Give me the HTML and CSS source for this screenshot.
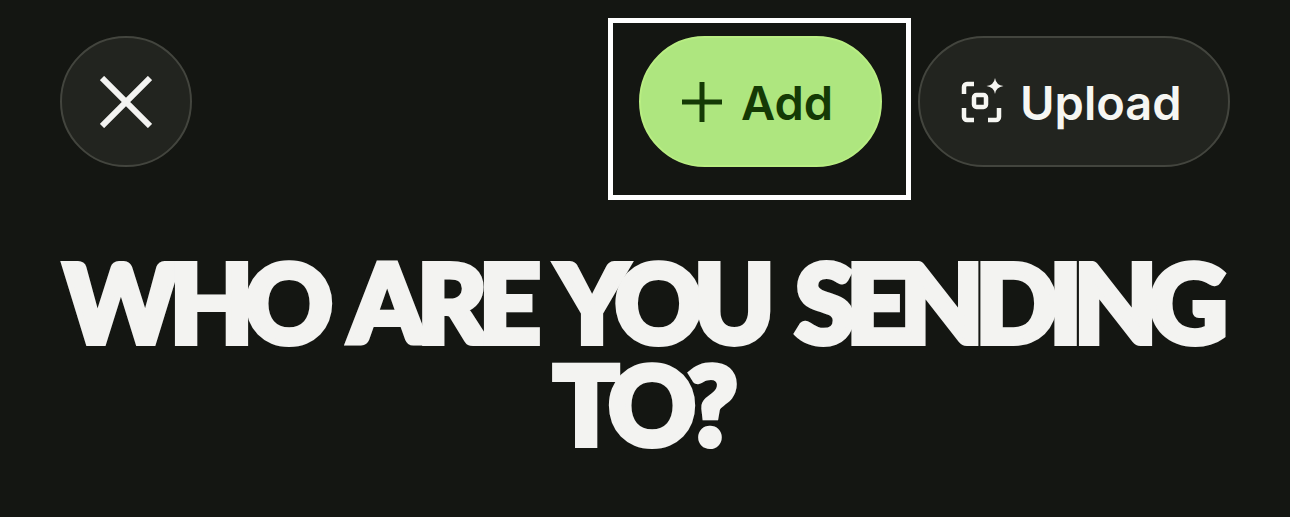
FILE: index.html
```html
<!DOCTYPE html>
<html lang="en">
<head>
<meta charset="utf-8">
<title>Who are you sending to?</title>
<link rel="stylesheet" href="styles.css">
</head>
<body>
<main class="screen">
  <header class="toolbar">
    <button class="btn btn-round" aria-label="Close">
      <svg class="icon-close" viewBox="0 0 52 52" aria-hidden="true"><path d="M2 2 50 50M50 2 2 50"/></svg>
    </button>
    <div class="actions">
      <button class="btn btn-add">
        <svg class="icon-plus" viewBox="0 0 42 42" aria-hidden="true"><path d="M21 1V41M1 21H41"/></svg>
        <span class="label">Add</span>
      </button>
      <button class="btn btn-upload">
        <svg class="icon-upload" viewBox="0 0 42 44" aria-hidden="true">
          <path class="line" d="M14 4H7A3 3 0 0 0 4 7V14M4 28V37A3 3 0 0 0 7 40H14M28 40H36A3 3 0 0 0 39 37V28"/>
          <rect class="line" x="14" y="15" width="12" height="12" rx="2.500"/>
          <path class="fill" d="M35 -2Q36 5 43.500 6Q36 7 35 14Q34 7 26.500 6Q34 5 35 -2Z"/>
        </svg>
        <span class="label">Upload</span>
      </button>
    </div>
  </header>
  <h1 class="title">WHO ARE YOU SENDING TO?</h1>
</main>
</body>
</html>
```
FILE: styles.css
```css
* { box-sizing: border-box; }
html, body { margin: 0; height: 100%; }
body {
  background: #141612;
  color: #f3f3f1;
  font-family: "Inter", "Liberation Sans", sans-serif;
  overflow: hidden;
}
.screen {
  display: flex;
  flex-direction: column;
  height: 517px;
  padding: 36px 60px 0;
}
.toolbar {
  display: flex;
  justify-content: space-between;
  align-items: flex-start;
}
.actions { display: flex; gap: 36px; }
.btn {
  display: flex;
  align-items: center;
  height: 131px;
  margin: 0;
  border: 2px solid #43453e;
  border-radius: 66px;
  background: #22241f;
  color: #f6f6f2;
  font: 600 47px/1 "Inter", "Liberation Sans", sans-serif;
}
.label { position: relative; top: 1px; }
.btn-round { justify-content: center; width: 132px; padding: 0; }
.icon-close { width: 52px; height: 52px; fill: none; stroke: #f3f3f1; stroke-width: 6; }
.btn-add {
  position: relative;
  gap: 18px;
  width: 243px;
  padding: 0 0 0 40px;
  border-color: #b9ee83;
  background: #aee67f;
  color: #143a05;
}
.btn-add::after {
  content: "";
  position: absolute;
  top: -20px;
  left: -33px;
  right: -31px;
  bottom: -35px;
  border: 5px solid #fff;
}
.icon-plus { width: 42px; height: 42px; fill: none; stroke: #143a05; stroke-width: 5; }
.btn-upload { gap: 18px; width: 312px; padding: 0 0 0 40px; }
.icon-upload { width: 42px; height: 44px; overflow: visible; }
.icon-upload .line { fill: none; stroke: #f6f6f2; stroke-width: 4.500; }
.icon-upload .fill { fill: #f6f6f2; }
.title {
  margin: 83px 0 0;
  padding-right: 7px;
  font-family: "Lato", "Inter", sans-serif;
  font-size: 108px;
  font-weight: 900;
  line-height: 102px;
  letter-spacing: -8.200px;
  word-spacing: 11px;
  text-align: center;
  color: #f3f3f1;
  -webkit-text-stroke: 6px #f3f3f1;
}
```
